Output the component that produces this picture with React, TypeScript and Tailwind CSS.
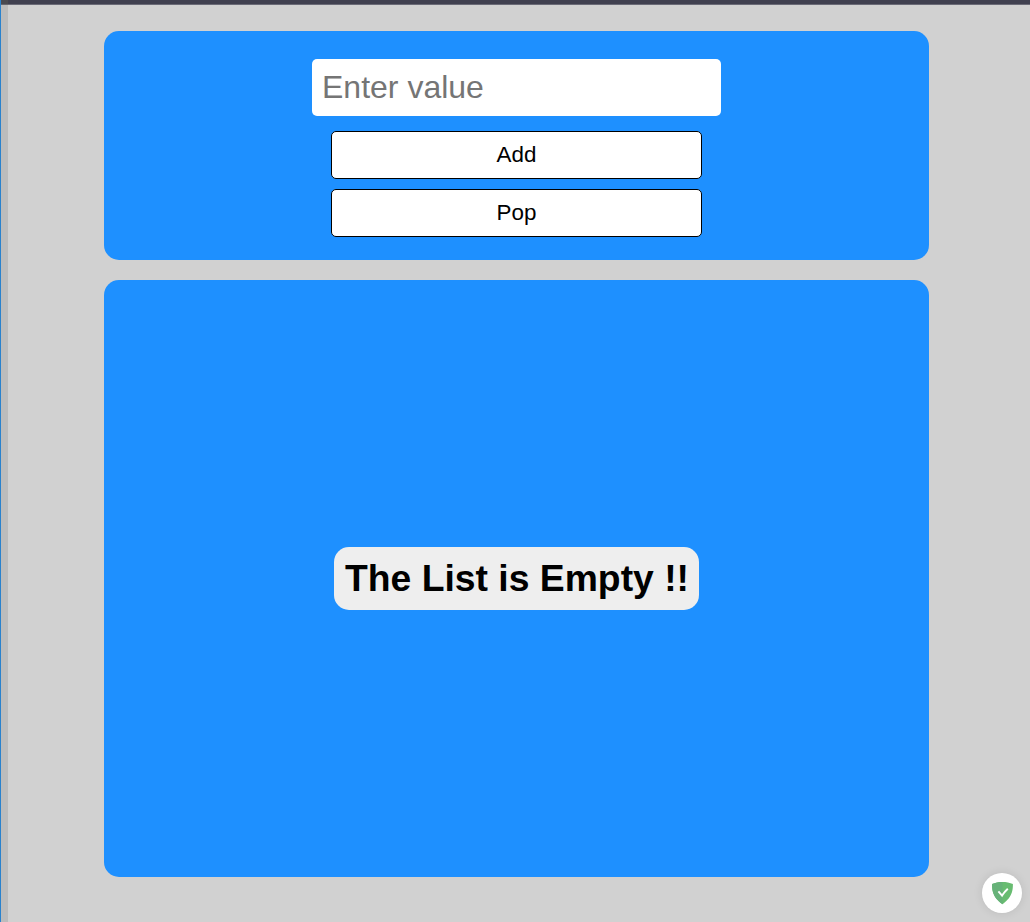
import { useState } from "react";

function ShieldBadge() {
  return (
    <div className="fixed right-2 bottom-[9px] flex size-10 items-center justify-center rounded-full bg-white shadow-[0_0_10px_rgba(0,0,0,0.1)]">
      <svg width="40" height="40" viewBox="0 0 40 40" fill="none">
        <path
          d="M20.5 9C17 9 13 9.6 10.1 11.1C10.1 14.6 9.6 24 20.5 31.2C31.4 24 30.9 14.6 30.9 11.1C28 9.6 24 9 20.5 9Z"
          fill="#68bc71"
        />
        <path
          d="M20.5 9C17 9 13 9.6 10.1 11.1C10.1 14.6 9.6 24 20.5 31.2Z"
          fill="#67b279"
        />
        <path d="M16.4 18.4L20.1 22.6C21.5 20.4 23.4 18 25.8 15.8" stroke="#fff" strokeWidth="1.9" />
      </svg>
    </div>
  );
}

export default function App() {
  const [value, setValue] = useState("");
  const [items, setItems] = useState<string[]>([]);

  const add = () => {
    if (!value) return;
    setItems([...items, value]);
    setValue("");
  };

  const buttonClass =
    "h-12 w-[371px] rounded-[5px] border border-black bg-white text-[22.4px] leading-none text-black";

  return (
    <div className="flex h-screen flex-col overflow-hidden bg-[#d1d1d1] font-['Liberation_Sans',Arial,sans-serif]">
      <div className="flex min-h-0 flex-1">
        <div className="w-px shrink-0 bg-[#2a82cd]" />
        <div className="flex w-[7px] shrink-0 flex-col bg-[#bcbcbc]">
          <div className="h-1 bg-[#4a4a50]" />
          <div className="h-px bg-[#66666e]" />
        </div>
        <div className="flex flex-1 flex-col">
          <div className="h-[5px] shrink-0 border-b border-[#6a6a76] bg-[#40404f]" />
          <main className="flex flex-1 flex-col gap-5 pt-[26px] pr-[101px] pb-[45px] pl-24">
            <section className="flex h-[229px] shrink-0 flex-col items-center rounded-[15px] bg-[#1e90ff] pt-7">
              <input
                className="h-[57px] w-[409px] rounded-[5px] bg-white px-2.5 text-[32px] text-black outline-none placeholder:text-[#757575]"
                placeholder="Enter value"
                value={value}
                onChange={(e) => setValue(e.target.value)}
              />
              <div className="mt-[15px] flex flex-col gap-2.5">
                <button className={buttonClass} onClick={add}>
                  Add
                </button>
                <button className={buttonClass} onClick={() => setItems(items.slice(0, -1))}>
                  Pop
                </button>
              </div>
            </section>
            <section className="flex flex-1 flex-col items-center justify-center gap-2.5 rounded-[15px] bg-[#1e90ff]">
              {items.length === 0 ? (
                <h1 className="flex h-[63px] w-[365px] items-center justify-center rounded-[15px] bg-[#eeeeee] pl-px text-[37.3px] leading-[43px] font-bold whitespace-nowrap text-black">
                  The List is Empty !!
                </h1>
              ) : (
                items.map((item, i) => (
                  <div key={i} className="rounded-[5px] bg-white px-6 py-2 text-[22.4px] text-black">
                    {item}
                  </div>
                ))
              )}
            </section>
          </main>
        </div>
      </div>
      <ShieldBadge />
    </div>
  );
}
